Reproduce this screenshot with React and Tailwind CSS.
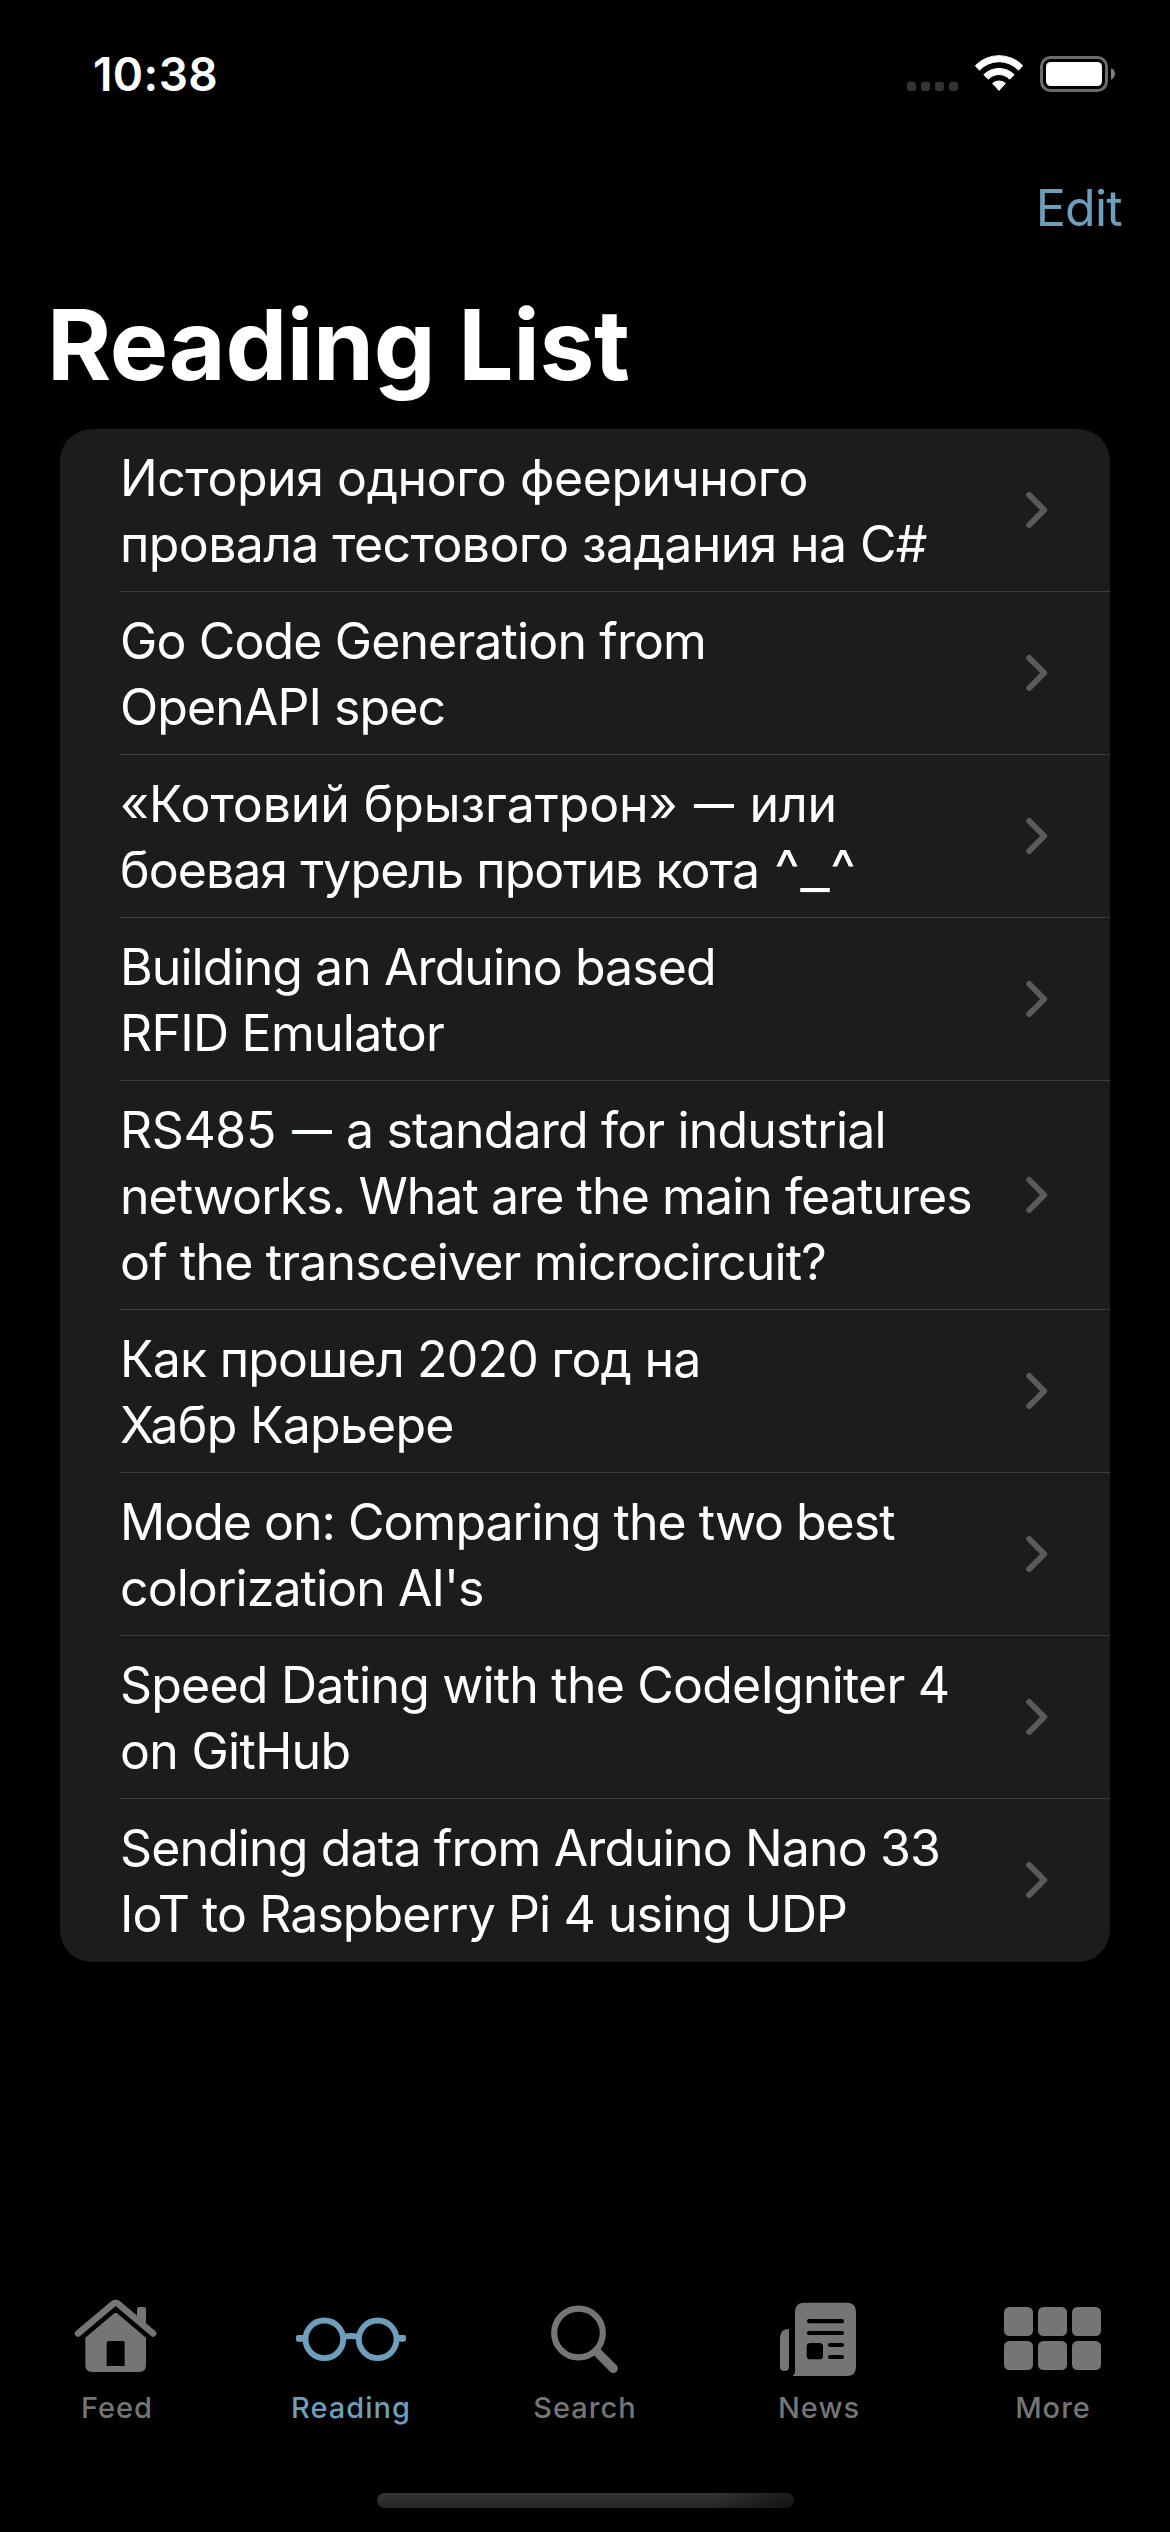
const Dash = () => <span className="-mx-[3px] inline-block scale-x-[0.8]">—</span>;

const articles = [
  [
    ['История одного фееричного', 'tracking-[-0.44px]'],
    ['провала тестового задания на C#', 'tracking-[-0.62px]'],
  ],
  [
    ['Go Code Generation from', 'tracking-[-0.87px]'],
    ['OpenAPI spec', 'tracking-[-0.93px]'],
  ],
  [
    [<>«Котовий брызгатрон» <Dash /> или</>, 'tracking-[-0.1px]'],
    [
      <>
        боевая турель против кота{' '}
        <span className="ml-[2px] text-[54px] leading-[0px] tracking-[0.5px]">^<span className="text-[66px] leading-[0px] font-light">_</span>^</span>
      </>,
      'tracking-[-0.95px]',
    ],
  ],
  [
    ['Building an Arduino based', 'tracking-[-0.93px]'],
    ['RFID Emulator', 'tracking-[-0.73px]'],
  ],
  [
    [<><span className="tracking-[-0.4px]">RS485 </span><Dash /> a standard for industrial</>, 'tracking-[-0.83px]'],
    ['networks. What are the main features', 'tracking-[-0.93px]'],
    ['of the transceiver microcircuit?', 'tracking-[-0.85px]'],
  ],
  [
    ['Как прошел 2020 год на', 'tracking-[-0.8px]'],
    ['Хабр Карьере', 'tracking-[-0.75px]'],
  ],
  [
    ['Mode on: Comparing the two best', 'tracking-[-0.99px]'],
    ["colorization AI's", 'tracking-[-0.93px]'],
  ],
  [
    ['Speed Dating with the CodeIgniter 4', 'tracking-[-0.79px]'],
    ['on GitHub', 'tracking-[-0.7px]'],
  ],
  [
    ['Sending data from Arduino Nano 33', 'tracking-[-0.88px]'],
    ['IoT to Raspberry Pi 4 using UDP', 'tracking-[-0.93px]'],
  ],
];

function StatusIcons() {
  return (
    <svg className="mt-1 h-[45px] w-[215px]" viewBox="75 60 645 135">
      <g fill="#333333">
        <rect x="81" y="155.500" width="27" height="27.500" rx="8" />
        <rect x="123" y="155.500" width="27" height="27.500" rx="8" />
        <rect x="165" y="155.500" width="27" height="27.500" rx="8" />
        <rect x="207" y="155.500" width="27" height="27.500" rx="8" />
      </g>
      <g fill="white" stroke="white" strokeWidth="3" strokeLinejoin="round">
        <path d="M286 107A99 99 0 0 1 428 107L415.500 120.500A80 80 0 0 0 298.500 120.500Z" />
        <path d="M311.500 134A65 65 0 0 1 402.500 134L389 147.500A44 44 0 0 0 325 147.500Z" />
        <path d="M338 160A29 29 0 0 1 376 160L357 181.500Z" />
      </g>
      <rect x="484.500" y="82.500" width="195" height="99" rx="27" fill="none" stroke="#6b6b6b" strokeWidth="9" />
      <rect x="498" y="96" width="168" height="72" rx="14" fill="white" />
      <path d="M693 114.500Q705 120 705 131.500T693 149Z" fill="#808080" />
    </svg>
  );
}

function Chevron() {
  return (
    <svg className="h-[38px] w-[22px] shrink-0" viewBox="0 0 22 38" fill="none" stroke="#5a5a5e" strokeWidth="6" strokeLinecap="round" strokeLinejoin="round">
      <path d="M3.200 4L18.200 19L3.200 34" />
    </svg>
  );
}

function HouseIcon() {
  return (
    <svg className="h-20 w-[120px]" viewBox="51 78 360 240" fill="currentColor">
      <path d="M114 190.500L220 101Q227 96 234 101L339.500 190.500" fill="none" stroke="currentColor" strokeWidth="19.500" strokeLinecap="round" strokeLinejoin="round" />
      <path d="M291 142V117Q291 111 297 111H312Q318 111 318 117V166Z" />
      <path fillRule="evenodd" d="M136 203L221 131Q227 126 233 131L318 203V286Q318 306 298 306H156Q136 306 136 286ZM200 288H254V219Q254 213 248 213H206Q200 213 200 219Z" />
    </svg>
  );
}

function GlassesIcon() {
  return (
    <svg className="h-20 w-[120px]" viewBox="753 78 360 240" fill="none" stroke="currentColor" strokeWidth="17.500">
      <circle cx="853" cy="208" r="56.500" />
      <circle cx="1013" cy="208" r="56.500" />
      <path d="M912 200Q933 196 954 200" />
      <path d="M793 195H774Q768 195 768 201V209Q768 215 774 215H793ZM1073 195H1092Q1098 195 1098 201V209Q1098 215 1092 215H1073Z" fill="currentColor" stroke="none" />
    </svg>
  );
}

function SearchIcon() {
  return (
    <svg className="h-20 w-[120px]" viewBox="75 78 360 240" fill="none" stroke="currentColor">
      <circle cx="235.500" cy="189" r="73" strokeWidth="18.500" />
      <path d="M290 245L340 295.500" strokeWidth="27" strokeLinecap="round" />
    </svg>
  );
}

function NewsIcon() {
  return (
    <svg className="h-20 w-[120px]" viewBox="777 78 360 240" fill="currentColor">
      <path d="M867 177V290Q867 303 853.500 303Q840 303 840 290V204Q840 177 867 177Z" />
      <path d="M885 126Q885 98 913 98H1040Q1068 98 1068 126V290Q1068 318 1040 318H876Q885 314 885 304Z" />
      <g stroke="black" strokeWidth="12.500" strokeLinecap="round">
        <path d="M927 153.500H1026M927 189H1026M990 225H1026M990 261H1026" />
      </g>
      <rect x="920" y="219" width="49" height="49" rx="11" fill="black" />
    </svg>
  );
}

function GridIcon() {
  return (
    <svg className="h-20 w-[120px]" viewBox="99 78 360 240" fill="currentColor">
      <rect x="132" y="111" width="87" height="87" rx="16" />
      <rect x="234" y="111" width="87" height="87" rx="16" />
      <rect x="336" y="111" width="87" height="87" rx="16" />
      <rect x="132" y="213" width="87" height="87" rx="16" />
      <rect x="234" y="213" width="87" height="87" rx="16" />
      <rect x="336" y="213" width="87" height="87" rx="16" />
    </svg>
  );
}

const tabs = [
  { label: 'Feed', Icon: HouseIcon, color: 'text-[#757575]' },
  { label: 'Reading', Icon: GlassesIcon, color: 'text-[#6e9ebb]' },
  { label: 'Search', Icon: SearchIcon, color: 'text-[#757575]' },
  { label: 'News', Icon: NewsIcon, color: 'text-[#757575]' },
  { label: 'More', Icon: GridIcon, color: 'text-[#757575]' },
];

export default function App() {
  return (
    <div className="flex h-[2532px] w-full flex-col overflow-hidden bg-black font-['Inter',sans-serif] text-white">
      <header className="flex h-[178px] items-start justify-between pt-[46px] pr-[50px] pl-[93px]">
        <span className="text-[46px] leading-[56px] font-semibold tracking-[0.4px]">10:38</span>
        <StatusIcons />
      </header>

      <div className="flex justify-end pr-12">
        <button className="text-[50px] leading-[60px] tracking-[-0.7px] text-[#6e9ebb]">Edit</button>
      </div>

      <h1 className="mt-[47px] pl-[47px] text-[98px] leading-[120px] font-bold tracking-[-0.34px]">Reading List</h1>

      <ul className="mx-[60px] mt-6 overflow-hidden rounded-[32px] bg-[#1c1c1e] pl-[60px]">
        {articles.map((lines, i) => (
          <li key={i} className="flex items-center justify-between border-b border-[#3d3d40] pr-[62px] last:border-transparent">
            <div className="pt-4 pb-3.5 text-[50px] leading-[66px] whitespace-nowrap">
              {lines.map(([text, tracking], j) => (
                <div key={j} className={`h-[66px] ${tracking}`}>{text}</div>
              ))}
            </div>
            <Chevron />
          </li>
        ))}
      </ul>

      <nav className="mt-auto grid grid-cols-5">
        {tabs.map(({ label, Icon, color }) => (
          <div key={label} className={`flex flex-col items-center gap-3.5 ${color}`}>
            <Icon />
            <span className="text-[29px] leading-9 font-medium tracking-[1px]">{label}</span>
          </div>
        ))}
      </nav>
      <div className="mx-auto mt-[67px] mb-6 h-[15px] w-[417px] shrink-0 overflow-hidden rounded-full bg-linear-to-b from-[#353535] to-[#252525]">
        <div className="ml-auto h-full w-20 bg-linear-to-r from-transparent to-black/50" />
      </div>
    </div>
  );
}
